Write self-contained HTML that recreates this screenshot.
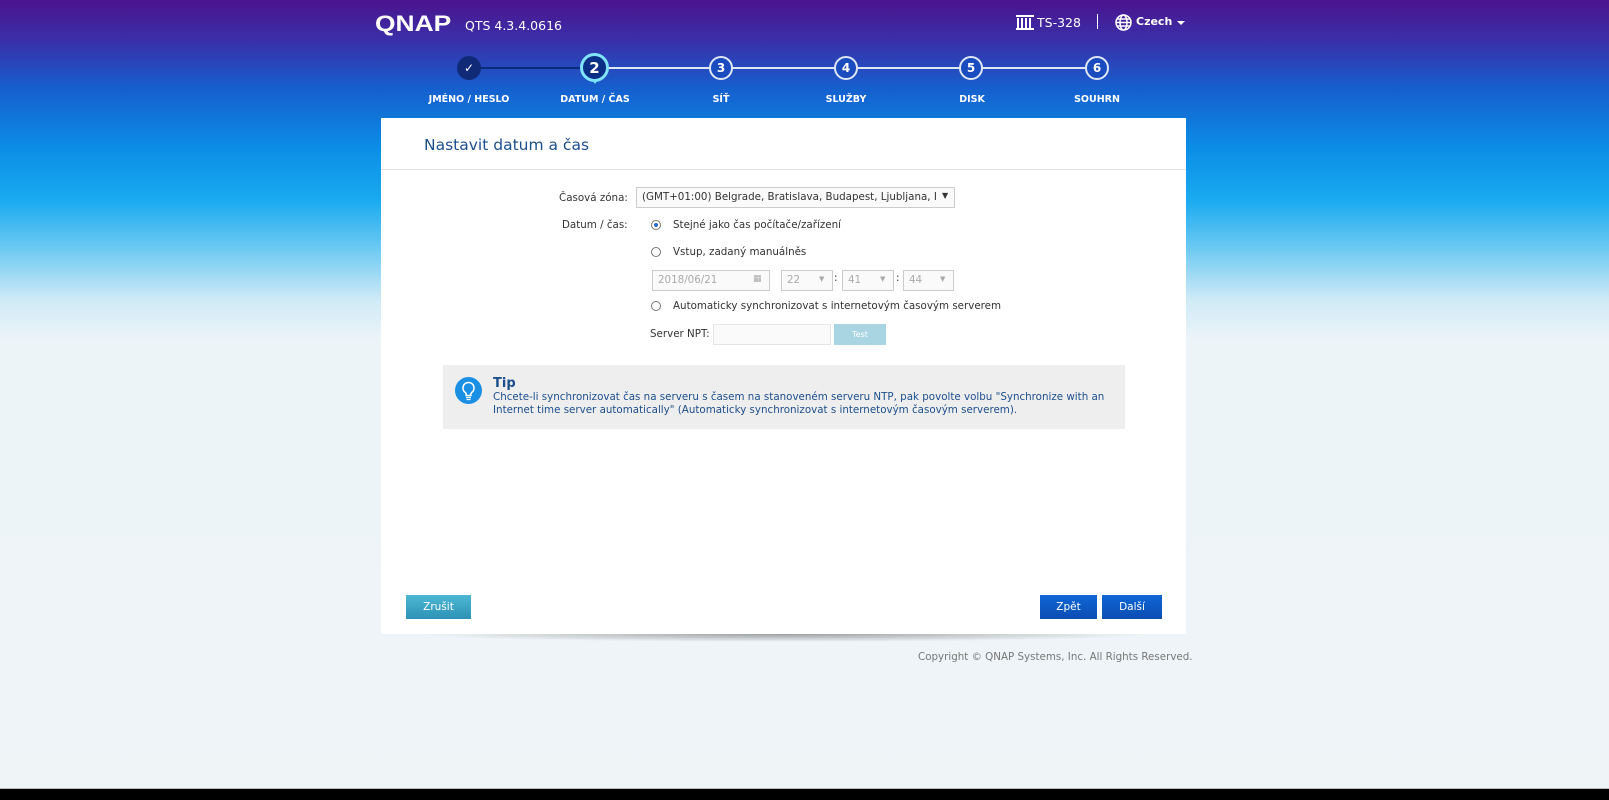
<!DOCTYPE html>
<html><head><meta charset="utf-8"><style>
*{margin:0;padding:0;box-sizing:border-box}
body{width:1609px;height:800px;overflow:hidden;position:relative;font-family:"DejaVu Sans","Liberation Sans",sans-serif;
background:linear-gradient(to bottom,#4b148e 0px,#3a2fa8 40px,#1560cf 90px,#0b8fe6 150px,#19aaf0 200px,#6fcaf2 250px,#cfeaf6 300px,#ecf4f8 340px,#eff4f7 800px);}
.a{position:absolute;white-space:nowrap}
.logo{left:375px;top:11px;color:#fff;font:900 22px "Liberation Sans",sans-serif;letter-spacing:0px;transform:scaleX(1.2);transform-origin:left}
.ver{left:465px;top:18px;color:#fff;font-size:12.5px}
.step{position:absolute;top:56px;width:24px;height:24px;border-radius:50%;border:2px solid #dfe7f5;color:#fff;font:bold 12px "DejaVu Sans",sans-serif;text-align:center;line-height:20px;background:#1a4bbf}
.lbl{position:absolute;top:94px;color:#fff;font:bold 9.5px "DejaVu Sans",sans-serif;transform:translateX(-50%);white-space:nowrap}
.card{left:381px;top:118px;width:805px;height:516px;background:#fff}
.lab{font-size:10.3px;color:#333}
.sel{position:absolute;border:1px solid #ccc;background:#fafafa;font-size:10.3px;color:#aaa;padding-left:5px;line-height:19px;height:21px;white-space:nowrap;overflow:hidden}
.btn{position:absolute;top:595px;height:24px;color:#fff;font-size:10.5px;text-align:center;line-height:24px}
.radio{position:absolute;left:651px;width:10px;height:10px;border:1px solid #777;border-radius:50%;background:#fff}
</style></head><body>
<div class="a logo">QNAP</div>
<div class="a ver">QTS 4.3.4.0616</div>
<svg class="a" style="left:1016px;top:14px" width="18" height="16"><rect x="0" y="1" width="18" height="2" fill="#fff"/><rect x="1" y="4" width="2" height="11" fill="#fff"/><rect x="5" y="4" width="2" height="11" fill="#fff"/><rect x="9" y="4" width="2" height="11" fill="#fff"/><rect x="13" y="4" width="2" height="11" fill="#fff"/><rect x="0" y="14" width="18" height="2" fill="#fff"/></svg>
<div class="a" style="left:1037px;top:15px;color:#fff;font-size:12.5px">TS-328</div>
<div class="a" style="left:1097px;top:14px;width:1px;height:15px;background:#fff"></div>
<svg class="a" style="left:1115px;top:14px" width="17" height="17" fill="none" stroke="#fff" stroke-width="1.5"><circle cx="8.5" cy="8.5" r="7.5"/><ellipse cx="8.5" cy="8.5" rx="3.5" ry="7.5"/><line x1="1" y1="8.5" x2="16" y2="8.5"/><line x1="2" y1="5" x2="15" y2="5"/><line x1="2" y1="12" x2="15" y2="12"/></svg>
<div class="a" style="left:1136px;top:15px;color:#fff;font-size:11px;font-weight:bold">Czech</div>
<div class="a" style="left:1177px;top:21px;border:4px solid transparent;border-top-color:#fff"></div>
<!-- steps -->
<div class="a" style="left:469px;top:67px;width:125px;height:2px;background:#0a2a7a"></div>
<div class="a" style="left:594px;top:67px;width:503px;height:2px;background:#dfe7f5"></div>
<div class="step" style="left:457px;background:#102a78;border-color:#102a78">✓</div>
<div class="a" style="left:588px;top:74px;border:7px solid transparent;border-top:10px solid #7fe3fb"></div>
<div class="step" style="left:580px;top:53px;width:29px;height:29px;line-height:24px;font-size:15px;border:3px solid #7fe3fb;background:#0b2f86">2</div>
<div class="step" style="left:709px">3</div>
<div class="step" style="left:834px">4</div>
<div class="step" style="left:959px">5</div>
<div class="step" style="left:1085px">6</div>
<div class="lbl" style="left:469px">JMÉNO / HESLO</div>
<div class="lbl" style="left:595px">DATUM / ČAS</div>
<div class="lbl" style="left:721px">SÍŤ</div>
<div class="lbl" style="left:846px">SLUŽBY</div>
<div class="lbl" style="left:972px">DISK</div>
<div class="lbl" style="left:1097px">SOUHRN</div>
<!-- card -->
<div class="a card"></div>
<div class="a" style="left:381px;top:169px;width:805px;height:1px;background:#e3e3e3"></div>
<div class="a" style="left:424px;top:136px;color:#1d4f8c;font-size:15.5px">Nastavit datum a čas</div>
<div class="a lab" style="left:559px;top:192px">Časová zóna:</div>
<div class="sel" style="left:636px;top:187px;width:319px;color:#333;padding-right:18px">(GMT+01:00) Belgrade, Bratislava, Budapest, Ljubljana, I</div>
<div class="a" style="left:942px;top:191px;font-size:8px;color:#333">▼</div>
<div class="a lab" style="left:562px;top:219px">Datum / čas:</div>
<div class="radio" style="top:220px"></div><div class="a" style="left:654px;top:223px;width:4px;height:4px;border-radius:50%;background:#2a6bd6"></div>
<div class="a lab" style="left:673px;top:219px">Stejné jako čas počítače/zařízení</div>
<div class="radio" style="top:247px"></div>
<div class="a lab" style="left:673px;top:246px">Vstup, zadaný manuálněs</div>
<div class="sel" style="left:652px;top:270px;width:118px">2018/06/21</div>
<div class="a" style="left:753px;top:274px;font-size:9px;color:#aaa">▦</div>
<div class="sel" style="left:781px;top:270px;width:52px">22</div><div class="a" style="left:819px;top:275px;font-size:7px;color:#aaa">▼</div>
<div class="a lab" style="left:834px;top:272px">:</div>
<div class="sel" style="left:842px;top:270px;width:52px">41</div><div class="a" style="left:880px;top:275px;font-size:7px;color:#aaa">▼</div>
<div class="a lab" style="left:896px;top:272px">:</div>
<div class="sel" style="left:903px;top:270px;width:51px">44</div><div class="a" style="left:940px;top:275px;font-size:7px;color:#aaa">▼</div>
<div class="radio" style="top:301px"></div>
<div class="a lab" style="left:673px;top:300px">Automaticky synchronizovat s internetovým časovým serverem</div>
<div class="a lab" style="left:650px;top:328px">Server NPT:</div>
<div class="a" style="left:713px;top:324px;width:118px;height:21px;border:1px solid #e5e5e5;background:#fafafa"></div>
<div class="a" style="left:834px;top:324px;width:52px;height:21px;background:#a9d5e2;color:#fff;font-size:8px;text-align:center;line-height:21px">Test</div>
<!-- tip -->
<div class="a" style="left:443px;top:365px;width:682px;height:64px;background:#eeeeee"></div>
<svg class="a" style="left:455px;top:377px" width="27" height="27"><circle cx="13.5" cy="13.5" r="13.5" fill="#1a8fe4"/><path d="M13.5 5.5a5.5 5.5 0 0 0-3.2 10c.6.5.9 1.2.9 2v1h4.6v-1c0-.8.3-1.5.9-2a5.5 5.5 0 0 0-3.2-10z" fill="none" stroke="#fff" stroke-width="1.6"/><path d="M11 20.5h5M11.5 22.5h4" stroke="#fff" stroke-width="1.3"/></svg>
<div class="a" style="left:493px;top:376px;color:#1d4f8c;font-size:13px;font-weight:bold">Tip</div>
<div class="a" style="left:493px;top:391px;color:#1d4f8c;font-size:10.3px;line-height:13px">Chcete-li synchronizovat čas na serveru s časem na stanoveném serveru NTP, pak povolte volbu "Synchronize with an<br>Internet time server automatically" (Automaticky synchronizovat s internetovým časovým serverem).</div>
<!-- buttons -->
<div class="btn" style="left:406px;width:65px;background:linear-gradient(#4cb8d4,#2e92b6)">Zrušit</div>
<div class="btn" style="left:1040px;width:57px;background:linear-gradient(#1066d6,#0a4eb2)">Zpět</div>
<div class="btn" style="left:1102px;width:60px;background:linear-gradient(#1066d6,#0a4eb2)">Další</div>
<div class="a" style="left:415px;top:634px;width:738px;height:8px;background:radial-gradient(ellipse at top,rgba(0,0,0,.35),rgba(0,0,0,0) 70%)"></div>
<div class="a" style="left:918px;top:651px;color:#777;font-size:10.3px">Copyright © QNAP Systems, Inc. All Rights Reserved.</div>
<div class="a" style="left:0;top:788px;width:1609px;height:12px;background:#000;border-top:1px solid #bbb"></div>
</body></html>
